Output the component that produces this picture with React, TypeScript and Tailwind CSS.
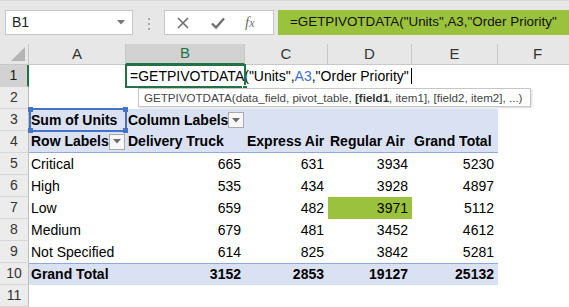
import React from "react";

const COLS = ["w-[97px]", "w-[119px]", "w-[83px]", "w-[84px]", "w-[86px]", "w-[80px]"];
const LETTERS = ["A", "B", "C", "D", "E", "F"];

type CellDef = {
  text?: React.ReactNode;
  right?: boolean;
  bold?: boolean;
  dropdown?: boolean;
  fill?: string;
};

const Dropdown = () => (
  <span className="ml-auto mr-[2px] flex h-[16px] w-[16px] shrink-0 items-center justify-center border border-[#a9a9a9] bg-[#f7f7f7]">
    <svg width="8" height="5" viewBox="0 0 8 5">
      <path d="M0 0h8L4 4.5z" fill="#6b6b6b" />
    </svg>
  </span>
);

const RowHead = ({ n, active }: { n: number; active?: boolean }) => (
  <div
    className={
      active
        ? "flex w-[29px] shrink-0 items-center justify-center border-b border-[#d0d0d0] border-r-2 border-r-[#217346] bg-[#d2d2d2] text-[14px] text-[#222]"
        : "flex w-[29px] shrink-0 items-center justify-center border-b border-[#d6d6d6] border-r border-r-[#bdbdbd] bg-[#ececec] text-[14px] text-[#333]"
    }
  >
    {n}
  </div>
);

const Row = ({
  n,
  cells,
  band,
  className = "",
}: {
  n: number;
  cells: CellDef[];
  band?: boolean;
  className?: string;
}) => (
  <div className="flex h-[22px]">
    <RowHead n={n} />
    <div className={`flex ${band ? "bg-[#d9e1f2]" : ""} ${className}`}>
      {cells.map((c, i) => (
        <div
          key={i}
          className={`${COLS[i]} flex shrink-0 items-center whitespace-nowrap text-[14px] text-black ${
            c.right ? "justify-end pr-[4px]" : "pl-[2px]"
          } ${c.bold ? "font-bold" : ""} ${c.fill ?? ""}`}
        >
          {c.text}
          {c.dropdown && <Dropdown />}
        </div>
      ))}
    </div>
  </div>
);

const body: [number, string, number, number, number, number][] = [
  [5, "Critical", 665, 631, 3934, 5230],
  [6, "High", 535, 434, 3928, 4897],
  [7, "Low", 659, 482, 3971, 5112],
  [8, "Medium", 679, 481, 3452, 4612],
  [9, "Not Specified", 614, 825, 3842, 5281],
];

export default function App() {
  return (
    <div className="relative h-[307px] w-[569px] overflow-hidden bg-white font-['Liberation_Sans',Arial,sans-serif]">
      {/* formula bar strip */}
      <div className="flex h-[44px] items-start border-t border-[#d9d9d9] bg-[#e7e7e7] pt-[9px]">
        <div className="ml-[5px] flex h-[25px] w-[128px] items-center border border-[#c6c6c6] bg-white pl-[6px] text-[14px] text-[#222]">
          B1
          <svg className="ml-auto mr-[7px]" width="8" height="5" viewBox="0 0 8 5">
            <path d="M0 0h8L4 4.5z" fill="#777" />
          </svg>
        </div>
        <div className="ml-[15px] mt-[8px] flex flex-col gap-[3px]">
          <span className="h-[2px] w-[2px] bg-[#a8a8a8]" />
          <span className="h-[2px] w-[2px] bg-[#a8a8a8]" />
          <span className="h-[2px] w-[2px] bg-[#a8a8a8]" />
        </div>
        <div className="ml-[14px] flex h-[25px] w-[110px] items-center border border-[#c6c6c6] bg-white">
          <svg className="ml-[12px]" width="12" height="12" viewBox="0 0 12 12">
            <path d="M1 1l10 10M11 1L1 11" stroke="#6e6e6e" strokeWidth="1.6" />
          </svg>
          <svg className="ml-[22px]" width="14" height="12" viewBox="0 0 14 12">
            <path d="M1 6.5l4 4L13 1.5" stroke="#6e6e6e" strokeWidth="2.4" fill="none" />
          </svg>
          <span className="ml-[20px] font-['Liberation_Serif',serif] text-[15px] italic text-[#6e6e6e]">
            f<span className="text-[12px]">x</span>
          </span>
        </div>
        <div className="ml-[4px] flex h-[25px] flex-1 items-center bg-[#9bc23c] pl-[12px] text-[13.4px] whitespace-nowrap text-[#111]">
          =GETPIVOTDATA("Units",A3,"Order Priority"
        </div>
      </div>

      {/* column headers */}
      <div className="flex h-[21px]">
        <div className="relative w-[29px] shrink-0 border-r border-b border-[#c8c8c8] bg-[#e7e7e7]">
          <svg className="absolute right-[3px] bottom-[3px]" width="14" height="14" viewBox="0 0 14 14">
            <path d="M14 0v14H0z" fill="#b5b5b5" />
          </svg>
        </div>
        {LETTERS.map((l, i) => (
          <div
            key={l}
            className={`${COLS[i]} flex shrink-0 items-center justify-center text-[15px] ${
              l === "B"
                ? "border-r border-b-2 border-r-[#c8c8c8] border-b-[#217346] bg-[#d2d2d2] text-[#217346]"
                : "border-r border-b border-[#c8c8c8] bg-[#e7e7e7] text-[#333]"
            }`}
          >
            {l}
          </div>
        ))}
      </div>

      {/* row 1 */}
      <div className="flex h-[22px]">
        <RowHead n={1} active />
        <div className="flex items-center whitespace-nowrap pl-[101px] text-[14px] text-black">
          =GETPIVOTDATA("Units",<span className="text-[#3d6fd0]">A3</span>,"Order Priority"
          <span className="ml-[2px] h-[16px] w-[1px] bg-black" />
        </div>
      </div>

      <Row n={2} cells={[{}, {}, {}, {}, {}, {}]} />
      <Row
        n={3}
        band
        cells={[
          { text: "Sum of Units", bold: true },
          { text: "Column Labels", bold: true, dropdown: true },
          {},
          {},
          {},
        ]}
      />
      <Row
        n={4}
        band
        className="border-b border-[#8ea9db]"
        cells={[
          { text: "Row Labels", bold: true, dropdown: true },
          { text: "Delivery Truck", bold: true },
          { text: "Express Air", bold: true },
          { text: "Regular Air", bold: true },
          { text: "Grand Total", bold: true },
        ]}
      />
      {body.map(([n, label, b, c, d, e]) => (
        <Row
          key={n}
          n={n}
          cells={[
            { text: label },
            { text: b, right: true },
            { text: c, right: true },
            { text: d, right: true, fill: n === 7 ? "bg-[#9bc23c]" : "" },
            { text: e, right: true },
          ]}
        />
      ))}
      <Row
        n={10}
        band
        className="border-t border-[#8ea9db]"
        cells={[
          { text: "Grand Total", bold: true },
          { text: 3152, right: true, bold: true },
          { text: 2853, right: true, bold: true },
          { text: 19127, right: true, bold: true },
          { text: 25132, right: true, bold: true },
        ]}
      />
      <Row n={11} cells={[{}, {}, {}, {}, {}, {}]} />

      {/* active cell B1 */}
      <div className="pointer-events-none absolute left-[125px] top-[64px] h-[24px] w-[121px] border-2 border-[#217346]" />
      <div className="absolute left-[242px] top-[85px] h-[6px] w-[6px] border border-white bg-[#217346]" />

      {/* A3 reference box */}
      <div className="pointer-events-none absolute left-[29px] top-[108px] h-[24px] w-[98px] border-2 border-[#4472c4]">
        <span className="absolute -left-[3px] -top-[3px] h-[5px] w-[5px] bg-[#4472c4]" />
        <span className="absolute -right-[3px] -top-[3px] h-[5px] w-[5px] bg-[#4472c4]" />
        <span className="absolute -left-[3px] -bottom-[3px] h-[5px] w-[5px] bg-[#4472c4]" />
        <span className="absolute -right-[3px] -bottom-[3px] h-[5px] w-[5px] bg-[#4472c4]" />
      </div>

      {/* function tooltip */}
      <div className="absolute left-[138px] top-[88px] flex h-[19px] w-[393px] items-center whitespace-pre border border-[#c6c6c6] bg-white pl-[5px] text-[11.6px] text-[#444] shadow-[1px_1px_2px_rgba(0,0,0,0.15)]">
        {"GETPIVOTDATA(data_field, pivot_table, "}
        <b className="text-[#333]">[field1</b>
        {", item1], [field2, item2], ...)"}
      </div>
    </div>
  );
}
